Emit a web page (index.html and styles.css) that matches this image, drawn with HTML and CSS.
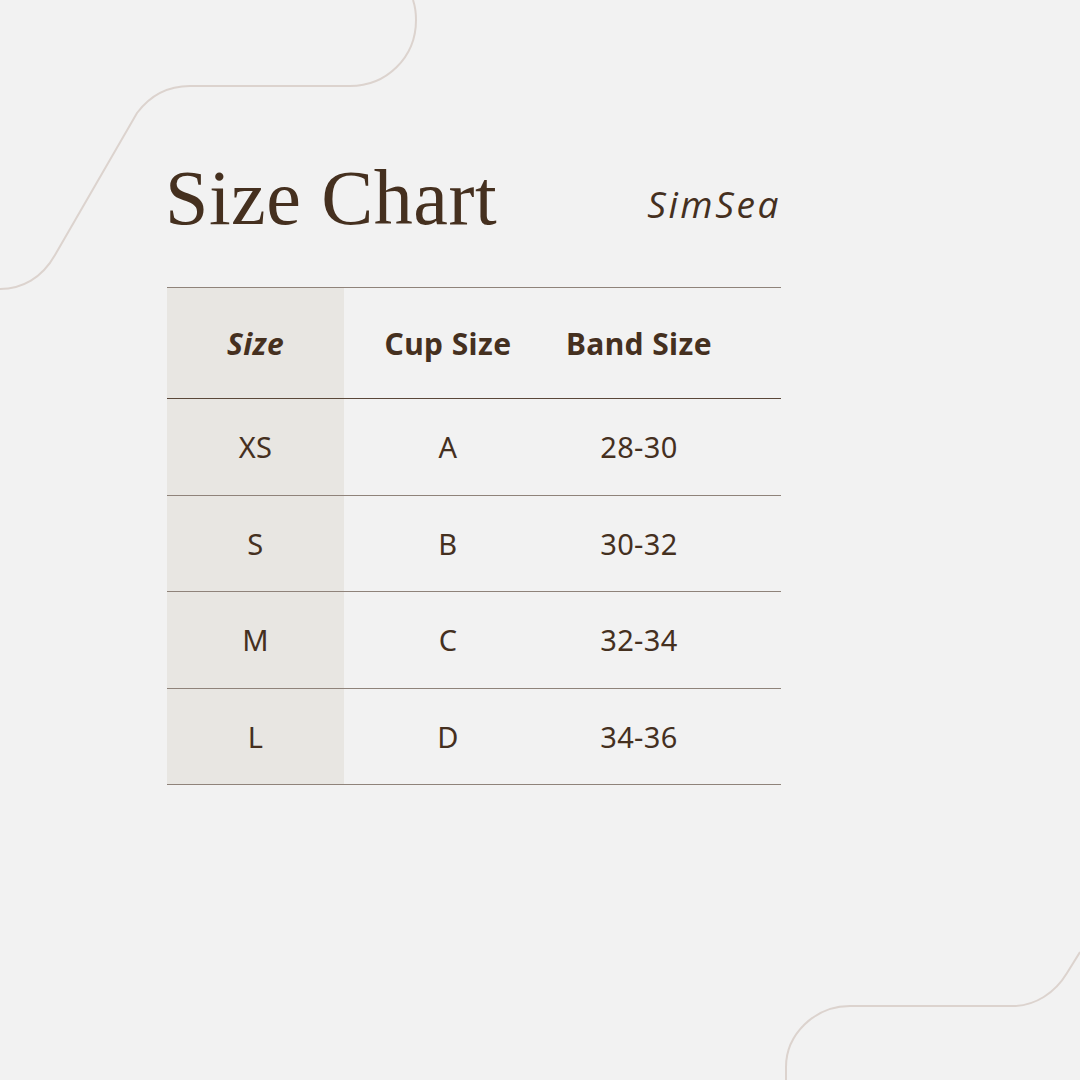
FILE: index.html
```html
<!DOCTYPE html>
<html lang="en">
<head>
<meta charset="utf-8">
<title>Size Chart</title>
<link rel="stylesheet" href="styles.css">
</head>
<body>
<div class="page">
  <svg class="deco" width="1080" height="1080" viewBox="0 0 1080 1080" aria-hidden="true">
    <path d="M0 289 C22 289 42 278 55 255 L137 113 C149 97 167 86 190 86 L350 86 C386 86 416 58 416 20 C416 12 415 6 413 0" />
    <path d="M1080 952 L1067 973 C1055 993 1035 1006 1013 1006 L850 1006 C814 1006 786 1035 786 1067 L786 1080" />
  </svg>
  <main class="content">
    <header class="head">
      <h1 class="title">Size Chart</h1>
      <span class="brand">SimSea</span>
    </header>
    <div class="table">
      <div class="row hrow">
        <div class="cell first it">Size</div>
        <div class="cell">Cup Size</div>
        <div class="cell">Band Size</div>
        <div class="cell"></div>
      </div>
      <div class="row">
        <div class="cell first">XS</div>
        <div class="cell">A</div>
        <div class="cell">28-30</div>
        <div class="cell"></div>
      </div>
      <div class="row">
        <div class="cell first">S</div>
        <div class="cell">B</div>
        <div class="cell">30-32</div>
        <div class="cell"></div>
      </div>
      <div class="row">
        <div class="cell first">M</div>
        <div class="cell">C</div>
        <div class="cell">32-34</div>
        <div class="cell"></div>
      </div>
      <div class="row">
        <div class="cell first">L</div>
        <div class="cell">D</div>
        <div class="cell">34-36</div>
        <div class="cell"></div>
      </div>
    </div>
  </main>
</div>
</body>
</html>
```
FILE: styles.css
```css
html, body {
  margin: 0;
  padding: 0;
  background: #f2f2f2;
}
.page {
  position: relative;
  width: 1080px;
  height: 1080px;
  overflow: hidden;
  background: #f2f2f2;
  color: #45301f;
}
.deco {
  position: absolute;
  left: 0;
  top: 0;
}
.deco path {
  fill: none;
  stroke: #dcd3ce;
  stroke-width: 2;
}
.content {
  position: relative;
  padding: 159px 0 0 165px;
  width: 616px;
}
.head {
  display: flex;
  justify-content: space-between;
  align-items: flex-end;
  height: 78px;
  margin-bottom: 50px;
}
.title {
  margin: 0;
  font-family: "Liberation Serif", serif;
  font-weight: normal;
  font-size: 78px;
  line-height: 1;
  letter-spacing: 0.5px;
}
.brand {
  font-family: "Open Sans", sans-serif;
  font-style: italic;
  font-weight: 400;
  font-size: 37px;
  line-height: 1;
  letter-spacing: 2.6px;
  margin-right: 0;
  margin-bottom: 15px;
}
.table {
  margin-left: 2px;
  border-top: 1px solid #8f837a;
}
.row {
  display: grid;
  grid-template-columns: 177px 208px 174px 1fr;
  height: 95.5px;
  border-bottom: 1px solid #8f837a;
}
.hrow {
  height: 110px;
  border-bottom-color: #5a4739;
}
.cell {
  display: flex;
  align-items: center;
  justify-content: center;
  font-family: "Noto Sans", sans-serif;
  font-size: 29px;
  letter-spacing: 0.4px;
}
.hrow .cell {
  font-weight: 700;
  font-size: 30px;
  letter-spacing: 0.4px;
}
.first {
  background: #e8e6e2;
}
.it {
  font-style: italic;
}
```
